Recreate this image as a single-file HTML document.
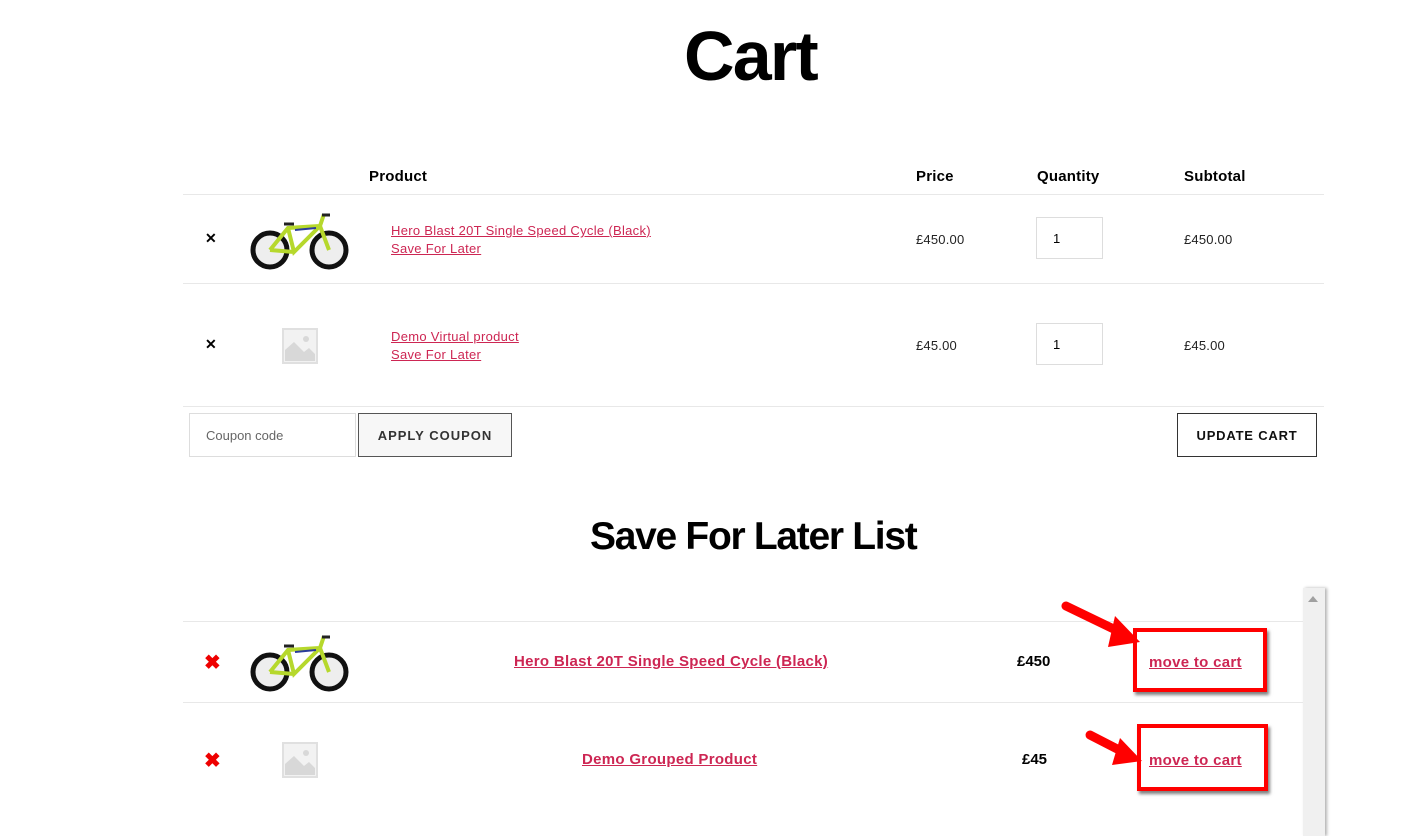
<!DOCTYPE html>
<html><head><meta charset="utf-8"><style>
*{margin:0;padding:0;box-sizing:border-box}
body{width:1428px;height:836px;background:#fff;position:relative;overflow:hidden;font-family:"Liberation Sans",Arial,sans-serif;color:#000}
.a{position:absolute;white-space:nowrap}
.h{font-weight:bold;font-size:15px;letter-spacing:0.2px}
.lnk{color:#cd2653;text-decoration:underline;font-size:13px;letter-spacing:0.3px}
.sm{font-size:13px;color:#222;letter-spacing:0.2px}
.line{position:absolute;height:1px;background:#e8e8e8}
.qty{position:absolute;width:67px;height:42px;border:1px solid #ddd;font-size:13px;padding:13px 0 0 16px}
.rx{color:#e00;font-size:20px;font-weight:bold}
.big{font-weight:bold;font-size:15px}
.box{position:absolute;border:4px solid #f00;box-shadow:2px 3px 3px rgba(0,0,0,.5)}
.mtc{color:#cd2653;text-decoration:underline;font-weight:bold;font-size:15px;letter-spacing:0.3px}
</style></head><body>
<div class="a" style="left:684px;top:16px;font-size:70px;font-weight:bold;letter-spacing:-1.8px">Cart</div>

<div class="a h" style="left:369px;top:168px">Product</div>
<div class="a h" style="left:916px;top:168px">Price</div>
<div class="a h" style="left:1037px;top:168px">Quantity</div>
<div class="a h" style="left:1184px;top:168px">Subtotal</div>
<div class="line" style="left:183px;top:194px;width:1141px"></div>

<svg width="0" height="0" style="position:absolute"><defs>
<g id="bike">
<circle cx="20" cy="38" r="17" fill="#eee" stroke="#111" stroke-width="5"/>
<circle cx="79" cy="38" r="17" fill="#eee" stroke="#111" stroke-width="5"/>
<path d="M20 38 L38 16 L70 14 L79 38 M38 16 L44 40 L70 14 M44 40 L20 38 M70 14 L74 2" stroke="#b6d82c" stroke-width="4" fill="none"/>
<path d="M34 12 h10 M72 3 h8" stroke="#222" stroke-width="3"/>
<path d="M45 18 L66 16" stroke="#2a3c9a" stroke-width="2"/>
</g>
<g id="ph">
<rect x="0" y="0" width="36" height="36" fill="#e0e0e0"/>
<rect x="2" y="2" width="32" height="32" fill="#f2f2f2"/>
<path d="M3 33 L3 22 L12 14 L22 24 L27 20 L33 26 L33 33Z" fill="#d8d8d8"/>
<circle cx="24" cy="11" r="3" fill="#d8d8d8"/>
</g></defs></svg>

<div class="a" style="left:205px;top:230px;font-size:14px;font-weight:bold">✕</div>
<svg class="a" style="left:250px;top:212px" width="100" height="58"><use href="#bike"/></svg>
<div class="a lnk" style="left:391px;top:223px">Hero Blast 20T Single Speed Cycle (Black)</div>
<div class="a lnk" style="left:391px;top:241px">Save For Later</div>
<div class="a sm" style="left:916px;top:232px">£450.00</div>
<div class="qty" style="left:1036px;top:217px">1</div>
<div class="a sm" style="left:1184px;top:232px">£450.00</div>
<div class="line" style="left:183px;top:283px;width:1141px"></div>

<div class="a" style="left:205px;top:336px;font-size:14px;font-weight:bold">✕</div>
<svg class="a" style="left:282px;top:328px" width="36" height="36"><use href="#ph"/></svg>
<div class="a lnk" style="left:391px;top:329px">Demo Virtual product</div>
<div class="a lnk" style="left:391px;top:347px">Save For Later</div>
<div class="a sm" style="left:916px;top:338px">£45.00</div>
<div class="qty" style="left:1036px;top:323px">1</div>
<div class="a sm" style="left:1184px;top:338px">£45.00</div>
<div class="line" style="left:183px;top:406px;width:1141px"></div>

<div class="a" style="left:189px;top:413px;width:167px;height:44px;border:1px solid #ddd;font-size:13px;color:#666;padding:14px 0 0 16px">Coupon code</div>
<div class="a" style="left:358px;top:413px;width:154px;height:44px;border:1px solid #555;background:#f7f7f7;font-size:13px;font-weight:bold;letter-spacing:1px;color:#333;text-align:center;padding-top:14px">APPLY COUPON</div>
<div class="a" style="left:1177px;top:413px;width:140px;height:44px;border:1px solid #333;font-size:13px;font-weight:bold;letter-spacing:0.8px;color:#111;text-align:center;padding-top:14px">UPDATE CART</div>

<div class="a" style="left:590px;top:515px;font-size:39px;font-weight:bold;letter-spacing:-1.3px">Save For Later List</div>

<div class="a" style="left:1303px;top:588px;width:22px;height:248px;background:#f0f0f0;box-shadow:2px 0 3px rgba(0,0,0,.3)"></div>
<div class="a" style="left:1308px;top:596px;width:0;height:0;border-left:5px solid transparent;border-right:5px solid transparent;border-bottom:6px solid #a0a0a0"></div>

<div class="line" style="left:183px;top:621px;width:1120px"></div>
<div class="a rx" style="left:204px;top:650px">✖</div>
<svg class="a" style="left:250px;top:634px" width="100" height="58"><use href="#bike"/></svg>
<div class="a mtc" style="left:514px;top:653px">Hero Blast 20T Single Speed Cycle (Black)</div>
<div class="a big" style="left:1017px;top:653px">£450</div>
<div class="box" style="left:1133px;top:628px;width:134px;height:64px"></div>
<div class="a mtc" style="left:1149px;top:654px">move to cart</div>
<div class="line" style="left:183px;top:702px;width:1120px"></div>

<div class="a rx" style="left:204px;top:748px">✖</div>
<svg class="a" style="left:282px;top:742px" width="36" height="36"><use href="#ph"/></svg>
<div class="a mtc" style="left:582px;top:751px">Demo Grouped Product</div>
<div class="a big" style="left:1022px;top:751px">£45</div>
<div class="box" style="left:1137px;top:724px;width:131px;height:67px"></div>
<div class="a mtc" style="left:1149px;top:752px">move to cart</div>

<svg class="a" style="left:1060px;top:600px" width="100" height="170">
<path d="M6 6 L62 33" stroke="#f00" stroke-width="9" stroke-linecap="round"/>
<path d="M55 16 L80 42 L48 47Z" fill="#f00"/>
<path d="M30 135 L65 153" stroke="#f00" stroke-width="9" stroke-linecap="round"/>
<path d="M60 138 L82 161 L52 165Z" fill="#f00"/>
</svg>
</body></html>
